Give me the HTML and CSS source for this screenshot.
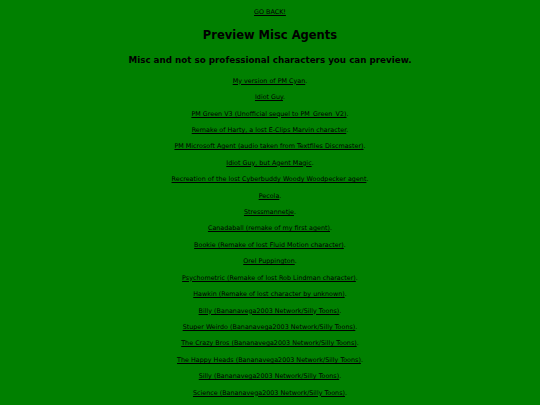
FILE: index.html
```html
<!DOCTYPE html>
<html lang="en">
<head>
<meta charset="utf-8">
<title>Preview Misc Agents</title>
<link rel="stylesheet" href="styles.css">
</head>
<body>
<main class="page">
  <p class="back"><a href="#">GO BACK!</a></p>
  <h1 class="title">Preview Misc Agents</h1>
  <h2 class="subtitle">Misc and not so professional characters you can preview.</h2>
  <ul class="agents">
    <li><a href="#">My version of PM Cyan</a>.</li>
    <li><a href="#">Idiot Guy</a>.</li>
    <li><a href="#">PM Green V3 (Unofficial sequel to PM_Green_V2)</a>.</li>
    <li><a href="#">Remake of Harty, a lost E-Clips Marvin character</a>.</li>
    <li><a href="#">PM Microsoft Agent (audio taken from Textfiles Discmaster)</a>.</li>
    <li><a href="#">Idiot Guy, but Agent Magic</a>.</li>
    <li><a href="#">Recreation of the lost Cyberbuddy Woody Woodpecker agent</a>.</li>
    <li><a href="#">Pecola</a>.</li>
    <li><a href="#">Stressmannetje</a>.</li>
    <li><a href="#">Canadaball (remake of my first agent)</a>.</li>
    <li><a href="#">Bookie (Remake of lost Fluid Motion character)</a>.</li>
    <li><a href="#">Orel Puppington</a>.</li>
    <li><a href="#">Psychometric (Remake of lost Rob Lindman character)</a>.</li>
    <li><a href="#">Hawkin (Remake of lost character by unknown)</a>.</li>
    <li><a href="#">Billy (Bananavega2003 Network/Silly Toons)</a>.</li>
    <li><a href="#">Stuper Weirdo (Bananavega2003 Network/Silly Toons)</a>.</li>
    <li><a href="#">The Crazy Bros (Bananavega2003 Network/Silly Toons)</a>.</li>
    <li><a href="#">The Happy Heads (Bananavega2003 Network/Silly Toons)</a>.</li>
    <li><a href="#">Silly (Bananavega2003 Network/Silly Toons)</a>.</li>
    <li><a href="#">Science (Bananavega2003 Network/Silly Toons)</a>.</li>
  </ul>
</main>
</body>
</html>
```
FILE: styles.css
```css
html, body {
  margin: 0;
  padding: 0;
  background: #008000;
}
body {
  font-family: "Comic Sans MS", "DejaVu Sans", sans-serif;
  color: #000;
}
.page {
  display: flex;
  flex-direction: column;
  align-items: center;
  text-align: center;
}
a {
  color: #000;
  text-decoration: underline;
}
.back {
  margin: 8px 0 0;
  font-size: 6.4px;
  line-height: 8px;
}
.title {
  margin: 12px 0 0;
  font-size: 11.5px;
  line-height: 14px;
  font-weight: bold;
}
.subtitle {
  margin: 12.5px 0 0;
  font-size: 8.75px;
  line-height: 11px;
  font-weight: bold;
}
.agents {
  list-style: none;
  margin: 7.2px 0 0;
  padding: 0;
  display: flex;
  flex-direction: column;
  align-items: center;
}
.agents li {
  font-size: 6.4px;
  line-height: 16.42px;
}
```
